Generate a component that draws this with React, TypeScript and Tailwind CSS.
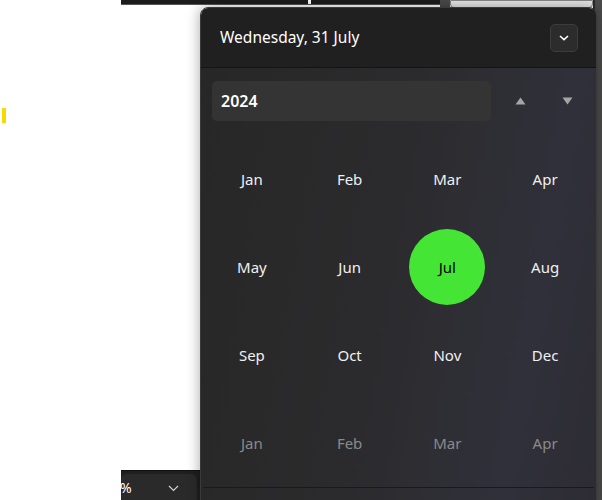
const MONTHS = ['Jan', 'Feb', 'Mar', 'Apr', 'May', 'Jun', 'Jul', 'Aug', 'Sep', 'Oct', 'Nov', 'Dec', 'Jan', 'Feb', 'Mar', 'Apr'];

function MonthCell({ label, index }: { label: string; index: number }) {
  const selected = index === 6;
  const faded = index >= 12;
  return (
    <div className="flex items-center justify-center h-[88px]">
      {selected ? (
        <div className="w-[76px] h-[76px] rounded-full bg-[#45e536] flex items-center justify-center text-black text-[15px]">
          {label}
        </div>
      ) : (
        <span className={faded ? 'text-[15px] text-[#8a8a8a]' : 'text-[15px] text-[#f0f0f0]'}>{label}</span>
      )}
    </div>
  );
}

export default function App() {
  return (
    <div className="relative w-[602px] h-[500px] bg-white overflow-hidden" style={{ fontFamily: '"Noto Sans", "Open Sans", sans-serif' }}>
      {/* background windows peeking out */}
      <div className="absolute left-[121px] top-0 w-[319px] h-[5px] bg-[#1c1c1c] border-b border-[#555]" />
      <div className="absolute left-[308px] top-0 w-[3px] h-[4px] bg-white" />
      <div className="absolute left-[440px] top-0 w-[10px] h-[8px] bg-[#4a4a4a]" />
      <div className="absolute left-[450px] top-0 w-[143px] h-[8px] bg-[#e8e8e8] border border-[#888] rounded-b-sm" />
      <div className="absolute left-[593px] top-0 w-[9px] h-[500px] bg-[#4c4c4c] border-l-2 border-[#2a2a2a]" />
      <div className="absolute left-[2px] top-[108px] w-[4px] h-[15px] bg-[#f5dc00]" />

      <div className="absolute left-[121px] top-[470px] w-[90px] h-[30px] bg-[#1f1f1f] border-t border-[#111]">
        <div className="mt-[3px] mr-[14px] h-[27px] rounded-t-md bg-[#2a2a2a] flex items-center justify-between pr-[18px]">
          <span className="text-white text-[14px] -ml-[1px]">%</span>
          <svg width="11" height="7" viewBox="0 0 11 7" className="mt-[2px]">
            <path d="M1 1l4.5 4.5L10 1" fill="none" stroke="#d0d0d0" strokeWidth="1.2" />
          </svg>
        </div>
      </div>

      {/* flyout */}
      <div className="absolute left-[200px] top-[7px] w-[397px] h-[500px] rounded-t-lg overflow-hidden border border-[#3a3a3a] shadow-[0_0_14px_rgba(0,0,0,0.35)]">
        <div className="h-[60px] bg-[#202020] border-b border-[#141414] flex items-center justify-between pl-[19px] pr-[18px]">
          <span className="text-[15.5px] text-white">Wednesday, 31 July</span>
          <div className="w-[28px] h-[28px] rounded-[5px] bg-[#2c2c2c] border border-[#3c3c3c] flex items-center justify-center">
            <svg width="10" height="6" viewBox="0 0 10 6">
              <path d="M1 1l4 3.6L9 1" fill="none" stroke="#ffffff" strokeWidth="1.6" />
            </svg>
          </div>
        </div>
        <div className="h-[440px] bg-[linear-gradient(100deg,#272727_0%,#2b2b2d_45%,#30303a_80%,#2d2c34_100%)] px-[2px]">
          <div className="flex items-center pt-[13px] pl-[9px]">
            <div className="w-[279px] h-[40px] rounded-[5px] bg-[#353535]/90 flex items-center pl-[9px]">
              <span className="text-[16px] font-semibold text-white">2024</span>
            </div>
            <div className="flex-1 flex items-center justify-around pl-[6px] pr-[3px]">
              <svg width="11" height="8" viewBox="0 0 11 8">
                <path d="M5.5 0.5L10.5 7.5H0.5Z" fill="#a5a5a8" />
              </svg>
              <svg width="11" height="8" viewBox="0 0 11 8">
                <path d="M0.5 0.5H10.5L5.5 7.5Z" fill="#a5a5a8" />
              </svg>
            </div>
          </div>
          <div className="grid grid-cols-4 mt-[14px] border-b border-[#1a1a1a]">
            {MONTHS.map((m, i) => (
              <MonthCell key={i} label={m} index={i} />
            ))}
          </div>
        </div>
      </div>
    </div>
  );
}
